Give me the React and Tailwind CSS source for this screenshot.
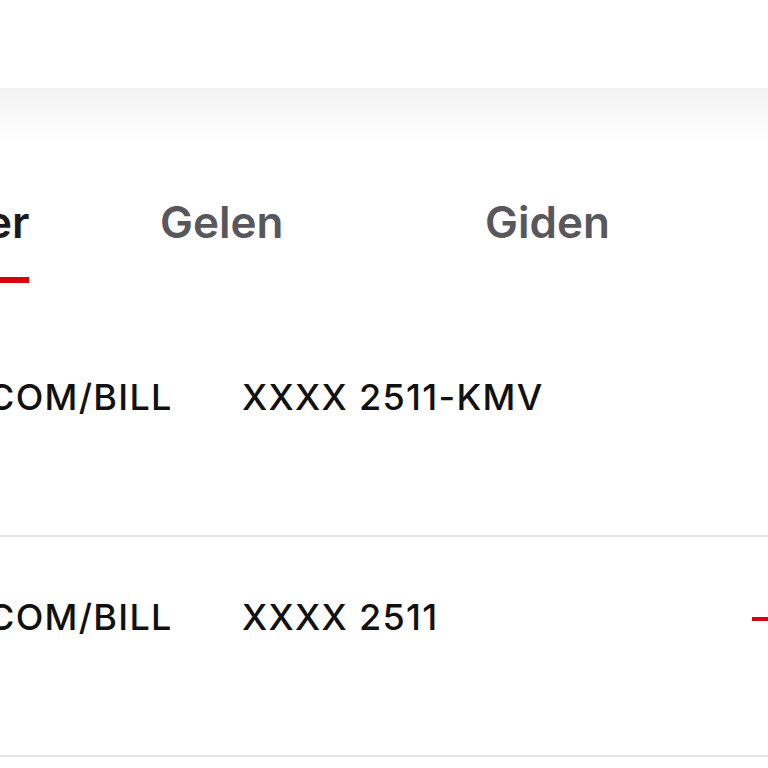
import React from 'react'

const rows = [
  { from: 'COM/BILL', ref: 'XXXX 2511-KMV', dash: false },
  { from: 'COM/BILL', ref: 'XXXX 2511', dash: true },
]

export default function App() {
  return (
    <div className="w-[768px] h-[768px] overflow-hidden bg-white" style={{ fontFamily: 'Inter, "Noto Sans", sans-serif' }}>
      <div className="h-[88px] bg-white" />
      <div className="bg-gradient-to-b from-[#f1f1f1] via-[#fafafa] to-white bg-no-repeat bg-[length:100%_60px]">
        <div className="pt-[106px] flex text-[44px] leading-[56px] font-semibold text-[#58585c]">
          <div className="w-[160px] shrink-0">
            <div className="-ml-[14px] text-[#1a1a1a]">er</div>
            <div className="mt-[27px] w-[29px] h-[6px] bg-[#d8000b]" />
          </div>
          <div className="w-[325px] shrink-0">Gelen</div>
          <div>Giden</div>
        </div>
        <div className="mt-[34px]">
          {rows.map((r, i) => (
            <div key={i} className="h-[220px] border-b-2 border-[#e4e4e4] flex items-start pt-[58px] text-[36px] leading-[44px] font-medium tracking-[1.3px] text-[#111]">
              <div className="w-[242px] shrink-0 -ml-[12px] whitespace-nowrap">{r.from}</div>
              <div className="flex-1 whitespace-nowrap ml-[12px]">{r.ref}</div>
              {r.dash && <div className="w-[16px] h-[4px] bg-[#d8000b] mt-[22px]" />}
            </div>
          ))}
        </div>
      </div>
    </div>
  )
}
